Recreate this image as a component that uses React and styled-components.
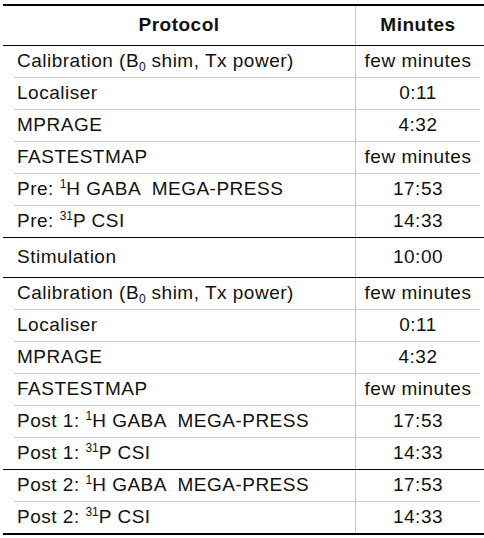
import React from "react";
import styled, { createGlobalStyle } from "styled-components";

const Global = createGlobalStyle`
  html, body { margin: 0; padding: 0; background: #ffffff; }
  body { font-family: "Liberation Sans", Arial, Helvetica, sans-serif; color: #111; }
`;

const Table = styled.div`
  margin: 4px 0 0 3px;
  width: 481px;
  display: flex;
  flex-direction: column;
  border-top: 2px solid #000;
  border-bottom: 2px solid #000;
  font-size: 19px;
  letter-spacing: 0.5px;
`;

const Row = styled.div`
  display: grid;
  grid-template-columns: 353px 124px 4px;
  height: ${(p) => p.$h}px;
`;

const Cell = styled.div`
  display: flex;
  align-items: center;
  justify-content: ${(p) => (p.$center ? "center" : "flex-start")};
  padding-left: ${(p) => (p.$center ? 0 : 14)}px;
  border-right: ${(p) => (p.$divided ? "1px solid #c9c9c9" : "none")};
  font-weight: ${(p) => (p.$bold ? 700 : 400)};
  white-space: nowrap;
`;

const Text = styled.span`
  white-space: pre;
  position: relative;
  top: -1px;
`;

const Rule = styled.div`
  height: 1px;
  background: ${(p) => (p.$strong ? "#000" : "#cfcfcf")};
  margin: ${(p) => (p.$strong ? "0" : "0 4px 0 11px")};
`;

const Sub = styled.span`
  font-size: 12px;
  position: relative;
  top: 4px;
  letter-spacing: 0;
`;

const Sup = styled.span`
  font-size: 12px;
  position: relative;
  top: -7px;
  letter-spacing: 0;
`;

const calib = (
  <>
    Calibration (B<Sub>0</Sub> shim, Tx power)
  </>
);

const block = () => [
  [calib, "few minutes"],
  ["Localiser", "0:11"],
  ["MPRAGE", "4:32"],
  ["FASTESTMAP", "few minutes"],
];

const gaba = (p) => (
  <>
    {p}: <Sup>1</Sup>H GABA  MEGA-PRESS
  </>
);
const csi = (p) => (
  <>
    {p}: <Sup>31</Sup>P CSI
  </>
);

const groups = [
  [...block(), [gaba("Pre"), "17:53"], [csi("Pre"), "14:33"]],
  [["Stimulation", "10:00", 39]],
  [...block(), [gaba("Post 1"), "17:53"], [csi("Post 1"), "14:33"]],
  [[gaba("Post 2"), "17:53"], [csi("Post 2"), "14:33"]],
];

function DataRow({ label, value, h = 31 }) {
  return (
    <Row $h={h}>
      <Cell $divided>
        <Text>{label}</Text>
      </Cell>
      <Cell $center>
        <Text>{value}</Text>
      </Cell>
      <span />
    </Row>
  );
}

export default function App() {
  return (
    <>
      <Global />
      <Table>
        <Row $h={39}>
          <Cell $divided $center $bold>
            <Text>Protocol</Text>
          </Cell>
          <Cell $center $bold>
            <Text>Minutes</Text>
          </Cell>
          <span />
        </Row>
        {groups.map((g, gi) => (
          <React.Fragment key={gi}>
            <Rule $strong />
            {g.map(([label, value, h], i) => (
              <React.Fragment key={i}>
                {i > 0 && <Rule />}
                <DataRow label={label} value={value} h={h} />
              </React.Fragment>
            ))}
          </React.Fragment>
        ))}
      </Table>
    </>
  );
}
